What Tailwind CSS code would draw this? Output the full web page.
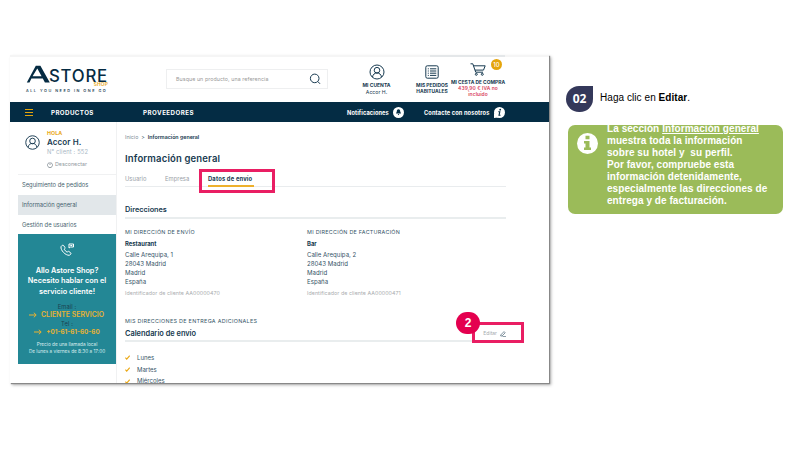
<!DOCTYPE html>
<html lang="es">

<head>
  <meta charset="UTF-8">
  <meta name="viewport" content="width=device-width, initial-scale=1.0">
  <title>Astore Shop – Información general</title>
  <script src="https://cdn.jsdelivr.net/npm/@tailwindcss/browser@4"></script>
</head>

<body class="w-[800px] h-[450px] overflow-hidden bg-white font-[Inter,sans-serif] text-[#173a50] whitespace-nowrap">
  <div class="flex items-start pl-[10px] pt-[55px]">

    <!-- Tienda -->
    <div class="relative w-[539px] h-[328px] shrink-0 shadow-[1px_1px_1px_#888,2px_2px_3px_#aaa]">
      <div class="h-full overflow-hidden bg-white">
        <div class="flex h-[2px] bg-[#f5f5f5]">
          <div class="ml-[420px] w-[75px] bg-[#e4e7e9]"></div>
        </div>

        <header class="flex h-[45px] pl-4">
          <div class="w-[84px] pt-[8px] text-[#052b42]">
            <div class="flex items-start h-[22px]">
              <svg class="w-[25px] h-[18px] shrink-0" viewBox="0 0 25 18" fill="#052b42">
                <path d="M.800 17.500 9.800.800h4.600L23.800 17.500h-4.900l-2.100-4H5.400L3.500 17.500zM6.600 11.300h9L11.300 3.600z" />
              </svg>
              <div class="-ml-[2px] w-[59px]">
                <div class="h-[17px] leading-[22px] text-[16.800px] tracking-[0.750px] font-medium">STORE</div>
                <div class="text-right leading-[5px] text-[4.800px] tracking-[0.200px] font-semibold text-[#e9a820]">SHOP</div>
              </div>
            </div>
            <div class="mt-[1px] leading-[6px] text-[3.800px] font-medium tracking-[1.500px]">ALL YOU NEED IN ONE GO</div>
          </div>

          <div class="ml-[56px] mt-[12px] flex h-[20px] w-[162px] items-center justify-between border border-[#eeeff0] pl-[9px] pr-[6px]">
            <span class="text-[5.300px] leading-[8px] tracking-[0.080px] text-[#999]">Busque un producto, una referencia</span>
            <svg class="size-[12px]" viewBox="0 0 12 12" fill="none" stroke="#173a50" stroke-width="1">
              <circle cx="5.700" cy="5.400" r="4.300" />
              <path d="m8.800 8.500 2.200 2.300" />
            </svg>
          </div>

          <div class="ml-[28px] flex w-[41px] flex-col items-center pt-[7px] text-[5.200px] leading-[7px]">
            <svg class="size-[16px]" viewBox="0 0 16 16" fill="none" stroke="#173a50" stroke-width="1">
              <circle cx="8" cy="8" r="7" />
              <circle cx="8" cy="6.200" r="2.800" />
              <path d="M3.500 13c.5-2.600 2-4 4.500-4s4 1.400 4.500 4" />
            </svg>
            <div class="mt-[2px] text-[5px] font-bold">MI CUENTA</div>
            <div>Accor H.</div>
          </div>

          <div class="ml-[15px] flex w-[40px] flex-col items-center pt-[8px] text-[4.900px] leading-[6px] font-bold">
            <svg class="size-[14px]" viewBox="0 0 14 14" fill="none" stroke="#173a50" stroke-width="1">
              <rect x=".8" y=".8" width="12.400" height="12.400" rx="1.500" />
              <path d="M2.800 3.800h1M5 3.800h6.300M2.800 6h1M5 6h6.300M2.800 8.200h1M5 8.200h6.300M2.800 10.400h1M5 10.400h6.300" />
            </svg>
            <div class="mt-[3px]">MIS PEDIDOS</div>
            <div>HABITUALES</div>
          </div>

          <div class="relative ml-[-2px] flex w-[56px] flex-col items-center pt-[6px] text-[4.900px] leading-[6px] font-bold">
            <svg class="w-[16px] h-[13px]" viewBox="0 0 16 13" fill="none" stroke="#173a50" stroke-width="1">
              <path d="M.5.800h2.300l2.900 8.400h7.300M3.400 2.800h11.800l-1.700 4.300H5" />
              <circle cx="6.300" cy="11.300" r="1" />
              <circle cx="12.300" cy="11.300" r="1" />
            </svg>
            <div class="mt-[3px]">MI CESTA DE COMPRA</div>
            <div class="font-semibold tracking-[0.100px] text-[#d8405c]">439,90 € IVA no</div>
            <div class="font-semibold tracking-[0.100px] text-[#d8405c]">incluido</div>
            <div class="absolute left-[41px] top-[2px] size-[11px] rounded-full bg-[#e5a50c] text-center text-[6px] leading-[12px] font-medium text-white">10</div>
          </div>
        </header>

        <nav class="flex h-[20px] items-center bg-[#042c44] pl-[15px] text-[6.200px] font-bold text-white">
          <svg class="w-[8px] h-[7px]" viewBox="0 0 8 7" stroke="#e5a50c" stroke-width="1">
            <path d="M0 .500h8M0 3.500h8M0 6.500h8" />
          </svg>
          <span class="ml-[18px] mt-[2px] w-[92px] tracking-[0.400px]">PRODUCTOS</span>
          <span class="mt-[2px] w-[204px] tracking-[0.480px]">PROVEEDORES</span>
          <span class="mt-[2px] w-[46px] text-[5.700px] tracking-[0.100px]">Notificaciones</span>
          <svg class="size-[11px]" viewBox="0 0 11 11">
            <circle cx="5.500" cy="5.500" r="5.500" fill="#fff" />
            <path d="M5.500 2.300c1.400 0 1.700 1 1.700 2.300l.800 1.900H3l.800-1.900c0-1.300.300-2.300 1.700-2.300zM4.700 7.100h1.600L5.500 8.300z" fill="#042c44" />
          </svg>
          <span class="ml-[20px] mt-[2px] w-[70px] text-[5.700px] tracking-[0.110px]">Contacte con nosotros</span>
          <svg class="size-[11px]" viewBox="0 0 11 11">
            <circle cx="5.500" cy="5.500" r="5.500" fill="#fff" />
            <path d="M0 11V6l4 4.500z" fill="#fff" />
            <path d="M4.300 4.800h1.500L5 8.300h1.500" fill="none" stroke="#042c44" stroke-width="1.100" />
            <circle cx="6.200" cy="2.700" r=".9" fill="#042c44" />
          </svg>
        </nav>

        <div class="flex h-[261px] pl-2">
          <aside class="w-[99px] shrink-0 border-r border-[#f0f1f2] text-[5.800px]">
            <div class="flex h-[53px] border-b border-[#f0f1f2] pl-[7px] pt-[8px]">
              <svg class="mt-[5px] size-[15px]" viewBox="0 0 16 16" fill="none" stroke="#173a50" stroke-width="1">
                <circle cx="8" cy="8" r="7.200" />
                <circle cx="8" cy="6.400" r="3" />
                <path d="M3.300 13.200c.5-2.800 2-4.200 4.700-4.200s4.200 1.400 4.700 4.200" />
              </svg>
              <div class="ml-[7px]">
                <div class="text-[5.300px] leading-[7px] tracking-[0.100px] font-bold text-[#e9a820]">HOLA</div>
                <div class="text-[8px] leading-[10px] tracking-[0.100px] font-semibold">Accor H.</div>
                <div class="leading-[10px] tracking-[0.150px] text-[#a9b8c5]">N° client : 552</div>
                <div class="mt-[3px] flex items-center gap-[2px] text-[5.300px] leading-[9px] text-[#8f989e]">
                  <svg class="size-[6px]" viewBox="0 0 6 6" fill="none" stroke="#7e888f" stroke-width=".8">
                    <path d="M2 .800A2.500 2.500 0 1 0 4 .800M3 0v3" />
                  </svg>
                  Desconectar
                </div>
              </div>
            </div>
            <div class="h-[20px] pl-[4px] leading-[20px] text-[#465f6e]">Seguimiento de pedidos</div>
            <div class="h-[20px] bg-[#e2e7ea] pl-[4px] leading-[20px] text-[#465f6e]">Información general</div>
            <div class="h-[19px] pl-[4px] leading-[20px] text-[#465f6e]">Gestión de usuarios</div>
            <div class="flex h-[130px] flex-col items-center bg-[#238795] pt-[9px] text-white">
              <svg class="w-[14px] h-[13px]" viewBox="0 0 14 13" fill="none" stroke="#fff" stroke-width="1">
                <path d="M2.300 2.300 1 3.700c-.6 3.600 4.500 8.800 8.300 8.600l1.700-1.500c.2-.4 0-.8-.3-1L8.900 8.500c-.4-.3-.8-.2-1.100.1l-.7.600C6 8.600 4.700 7.300 4.200 6.200l.6-.700c.3-.3.300-.7.100-1.100L3.600 2.500c-.4-.4-.9-.5-1.300-.2z" />
                <path d="M9 1h4.500v3h-3L9 5zM10.300 2.500h2" />
              </svg>
              <div class="mt-[10px] text-center text-[7.300px] leading-[10.300px] font-semibold">
                <div>Allo Astore Shop?</div>
                <div>Necesito hablar con el</div>
                <div>servicio cliente!</div>
              </div>
              <div class="mt-[5px] h-[9px] leading-[9px] tracking-[0.100px] text-[#1b4250]">Email :</div>
              <div class="mr-[1px] flex h-[8px] items-center gap-[4px] text-[6.900px] leading-[8px] font-semibold text-[#e9b233]">
                <svg class="w-[8px] h-[6px]" viewBox="0 0 8 6" fill="none" stroke="#e9b233"><path d="M0 3h7M4.800.700 7.200 3 4.800 5.300" /></svg>
                CLIENTE SERVICIO
              </div>
              <div class="h-[9px] leading-[9px] tracking-[0.100px] text-[#1b4250]">Tel :</div>
              <div class="flex h-[8px] items-center gap-[4px] text-[6.300px] leading-[8px] font-bold text-[#e9b233]">
                <svg class="w-[8px] h-[6px]" viewBox="0 0 8 6" fill="none" stroke="#e9b233"><path d="M0 3h7M4.800.700 7.200 3 4.800 5.300" /></svg>
                +01-61-61-60-60
              </div>
              <div class="mt-[5px] text-center text-[4.700px] leading-[7px] text-[#dceef0]">
                <div>Precio de una llamada local</div>
                <div>De lunes a viernes de 8:30 a 17:00</div>
              </div>
            </div>
          </aside>

          <main class="ml-[8px] w-[381px] text-[6.500px] text-[#355467]">
            <div class="mt-[10px] text-[5.300px] leading-[10px]">
              <span class="text-[#7b8b95]">Inicio</span><span class="mx-[3px]">&gt;</span><span class="font-semibold text-[#173a50]">Información general</span>
            </div>
            <h1 class="mt-[10px] text-[9.500px] leading-[13px] tracking-[0.160px] font-semibold text-[#173a50]">Información general</h1>
            <div class="mt-[7px] flex h-[15px] border-b border-[#e9ecee] text-[5.800px] leading-[14px] tracking-[0.050px] text-[#9aa2a7]">
              <span class="w-[40px]">Usuario</span>
              <span class="w-[43px]">Empresa</span>
              <span class="h-[15px] w-[46px] border-b-2 border-[#edb02c] font-bold tracking-[0.180px] text-[#173a50]">Datos de envío</span>
            </div>
            <h2 class="mt-[16px] h-[16px] border-b-2 border-[#e9edee] text-[7.300px] leading-[14px] font-semibold text-[#173a50]">Direcciones</h2>
            <div class="grid grid-cols-[182px_1fr] pt-[8px] text-[6.100px] leading-[9px]">
              <div>
                <div class="text-[5.400px] leading-[10px] tracking-[0.270px]">MI DIRECCIÓN DE ENVÍO</div>
                <div class="mt-[2px] text-[5.900px] font-bold text-[#173a50]">Restaurant</div>
                <div class="mt-[2px]">Calle Arequipa, 1</div>
                <div>28043 Madrid</div>
                <div>Madrid</div>
                <div>España</div>
                <div class="mt-[3px] text-[5.300px] leading-[9px] tracking-[0.060px] text-[#a9acae]">Identificador de cliente AA00000470</div>
              </div>
              <div>
                <div class="text-[5.400px] leading-[10px] tracking-[0.270px]">MI DIRECCIÓN DE FACTURACIÓN</div>
                <div class="mt-[2px] text-[5.900px] font-bold text-[#173a50]">Bar</div>
                <div class="mt-[2px]">Calle Arequipa, 2</div>
                <div>28043 Madrid</div>
                <div>Madrid</div>
                <div>España</div>
                <div class="mt-[3px] text-[5.300px] leading-[9px] tracking-[0.060px] text-[#a9acae]">Identificador de cliente AA00000471</div>
              </div>
            </div>
            <div class="mt-[18px] text-[5.400px] leading-[11px] tracking-[0.310px]">MIS DIRECCIONES DE ENTREGA ADICIONALES</div>
            <div class="flex h-[15px] items-start justify-between border-b-2 border-[#e9edee]">
              <h2 class="text-[7.400px] leading-[13px] font-semibold text-[#173a50]">Calendario de envío</h2>
              <div class="flex items-center gap-[3px] text-[5px] leading-[13px] text-[#a3a9ad]">
                Editar
                <svg class="size-[6px]" viewBox="0 0 6 6" fill="none" stroke="#4b6475" stroke-width=".7">
                  <path d="M.700 4 4 .600l1.200 1.200L2 5H.700zM2.500 5.600H6" />
                </svg>
              </div>
            </div>
            <ul class="mt-[10px] text-[6px] leading-[11.700px]">
              <li class="flex items-center gap-[7px]">
                <svg class="size-[5px]" viewBox="0 0 5 5" fill="none" stroke="#eba916" stroke-width="1.100"><path d="m.4 2.700 1.300 1.500L4.700.700" /></svg>
                Lunes
              </li>
              <li class="flex items-center gap-[7px]">
                <svg class="size-[5px]" viewBox="0 0 5 5" fill="none" stroke="#eba916" stroke-width="1.100"><path d="m.4 2.700 1.300 1.500L4.700.700" /></svg>
                Martes
              </li>
              <li class="flex items-center gap-[7px]">
                <svg class="size-[5px]" viewBox="0 0 5 5" fill="none" stroke="#eba916" stroke-width="1.100"><path d="m.4 2.700 1.300 1.500L4.700.700" /></svg>
                Miércoles
              </li>
            </ul>
          </main>
        </div>
      </div>

      <!-- Marcas sobre la captura -->
      <div class="absolute left-[189px] top-[114px] h-[24px] w-[76px] border-[3px] border-[#e91e63]"></div>
      <div class="absolute left-[462px] top-[267px] h-[21px] w-[52px] border-[3px] border-[#e91e63]"></div>
      <div class="absolute left-[446px] top-[257px] flex h-[22px] w-[24px] items-center justify-center rounded-full bg-[#e4004f] font-['Liberation_Sans',sans-serif] text-[12px] font-bold text-white">2</div>
    </div>

    <!-- Instrucciones -->
    <section class="ml-[17px] mt-[31px] w-[217px] font-['Liberation_Sans',sans-serif]">
      <div class="flex items-start">
        <div class="flex h-[26px] w-[27px] items-center justify-center rounded-full rounded-tr-[3px] bg-[#34385a] font-['Open_Sans',sans-serif] text-[12px] font-bold text-white">02</div>
        <p class="ml-[7px] text-[10px] leading-[24px] tracking-[0.060px] text-black">Haga clic en <b>Editar</b>.</p>
      </div>
      <div class="ml-[2px] mt-[13px] flex h-[89px] w-[215px] overflow-hidden rounded-[7px] bg-[#9bbb59] text-white">
        <svg class="ml-[9px] mt-[8px] size-[21px] shrink-0" viewBox="0 0 21 21">
          <circle cx="10.500" cy="10.500" r="10.500" fill="#fff" />
          <path d="M8.500 2.800h4v3.400h-4zM7 8h5.500v6.500H14V17H7v-2.500h1.500v-4H7z" fill="#9bbb59" />
        </svg>
        <div class="ml-[9px] mt-[-2px] text-[10px] leading-[12px] tracking-[0.060px] font-bold">
          <div>La sección <u>Información general</u></div>
          <div>muestra toda la información</div>
          <div>sobre su hotel y&nbsp; su perfil.</div>
          <div>Por favor, compruebe esta</div>
          <div>información detenidamente,</div>
          <div>especialmente las direcciones de</div>
          <div>entrega y de facturación.</div>
        </div>
      </div>
    </section>

  </div>
</body>
</html>
